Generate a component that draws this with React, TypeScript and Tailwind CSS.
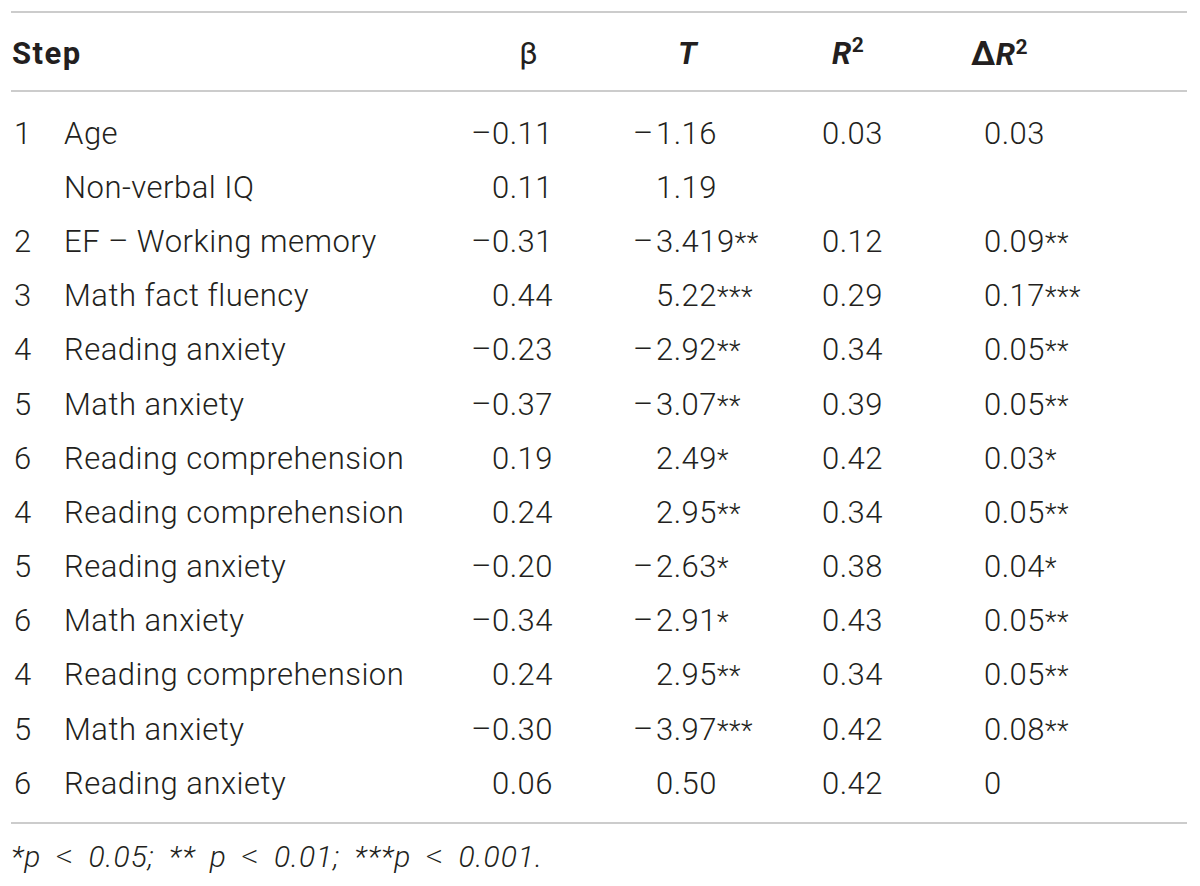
import React from 'react';

interface Row {
  step: string;
  label: string;
  beta: string;
  t: string;
  tStars?: string;
  r2: string;
  dr2: string;
  dr2Stars?: string;
}

const rows: Row[] = [
  { step: '1', label: 'Age', beta: '−0.11', t: '−1.16', r2: '0.03', dr2: '0.03' },
  { step: '', label: 'Non-verbal IQ', beta: '0.11', t: '1.19', r2: '', dr2: '' },
  { step: '2', label: 'EF – Working memory', beta: '−0.31', t: '−3.419', tStars: '**', r2: '0.12', dr2: '0.09', dr2Stars: '**' },
  { step: '3', label: 'Math fact fluency', beta: '0.44', t: '5.22', tStars: '***', r2: '0.29', dr2: '0.17', dr2Stars: '***' },
  { step: '4', label: 'Reading anxiety', beta: '−0.23', t: '−2.92', tStars: '**', r2: '0.34', dr2: '0.05', dr2Stars: '**' },
  { step: '5', label: 'Math anxiety', beta: '−0.37', t: '−3.07', tStars: '**', r2: '0.39', dr2: '0.05', dr2Stars: '**' },
  { step: '6', label: 'Reading comprehension', beta: '0.19', t: '2.49', tStars: '*', r2: '0.42', dr2: '0.03', dr2Stars: '*' },
  { step: '4', label: 'Reading comprehension', beta: '0.24', t: '2.95', tStars: '**', r2: '0.34', dr2: '0.05', dr2Stars: '**' },
  { step: '5', label: 'Reading anxiety', beta: '−0.20', t: '−2.63', tStars: '*', r2: '0.38', dr2: '0.04', dr2Stars: '*' },
  { step: '6', label: 'Math anxiety', beta: '−0.34', t: '−2.91', tStars: '*', r2: '0.43', dr2: '0.05', dr2Stars: '**' },
  { step: '4', label: 'Reading comprehension', beta: '0.24', t: '2.95', tStars: '**', r2: '0.34', dr2: '0.05', dr2Stars: '**' },
  { step: '5', label: 'Math anxiety', beta: '−0.30', t: '−3.97', tStars: '***', r2: '0.42', dr2: '0.08', dr2Stars: '**' },
  { step: '6', label: 'Reading anxiety', beta: '0.06', t: '0.50', r2: '0.42', dr2: '0' },
];

const grid = 'grid grid-cols-[53px_376px_120px_240px_160px_227px]';

// number with a fixed-width minus slot, so the digits line up
function Num({ value, stars, pad }: { value: string; stars?: string; pad?: boolean }) {
  const neg = value.startsWith('−');
  const digits = neg ? value.slice(1) : value;
  return (
    <span className="whitespace-nowrap">
      {neg ? (
        <span className="inline-block w-[23px]">–</span>
      ) : pad ? (
        <span className="inline-block w-[23px]" />
      ) : null}
      {digits}
      {stars && <span className="text-[27px]">{stars}</span>}
    </span>
  );
}

const Lt = () => <span className="text-[34px] not-italic font-extralight">&lt;</span>;

export default function App() {
  return (
    <div
      className="min-h-[886px] w-[1200px] bg-white text-[#231f20] font-light tracking-[0.5px]"
      style={{ fontFamily: 'Roboto, "Liberation Sans", sans-serif' }}
    >
      <div className="ml-[11px] w-[1176px] pt-[11px]">
        {/* Header */}
        <div className={`${grid} h-[81px] items-center border-t-2 border-b-2 border-[#cccccc] pt-[5px] text-[31px] font-bold`}>
          <div className="pl-[1px] tracking-[1.5px]">Step</div>
          <div />
          <div className="pr-[22px] text-right font-normal">β</div>
          <div className="pl-[118px] italic">T</div>
          <div className="pl-[32px]">
            <span className="italic">R</span>
            <sup className="text-[21px] top-[-0.55em]">2</sup>
          </div>
          <div className="pl-[11px]">
            <span className="text-[33px]">Δ</span>
            <span className="italic">R</span>
            <sup className="text-[21px] top-[-0.55em]">2</sup>
          </div>
        </div>

        {/* Body */}
        <div className="pt-[14px] pb-[12px] text-[31px]">
          {rows.map((r, i) => (
            <div key={i} className={`${grid} h-[54.2px] items-center leading-none`}>
              <div className="pl-[3px]">{r.step}</div>
              <div className="whitespace-nowrap">{r.label}</div>
              <div className="pr-[7px] text-right">
                <Num value={r.beta} />
              </div>
              <div className="pl-[73px]">
                <Num value={r.t} stars={r.tStars} pad />
              </div>
              <div className="pl-[22px]">{r.r2}</div>
              <div className="pl-[24px]">
                <Num value={r.dr2} stars={r.dr2Stars} />
              </div>
            </div>
          ))}
        </div>

        {/* Footnote */}
        <div className="border-t-2 border-[#cccccc] pt-[16px] text-[30px] italic leading-[30px] tracking-[1px] [word-spacing:6px]">
          *p <Lt /> 0.05; ** p <Lt /> 0.01; ***p <Lt /> 0.001.
        </div>
      </div>
    </div>
  );
}
